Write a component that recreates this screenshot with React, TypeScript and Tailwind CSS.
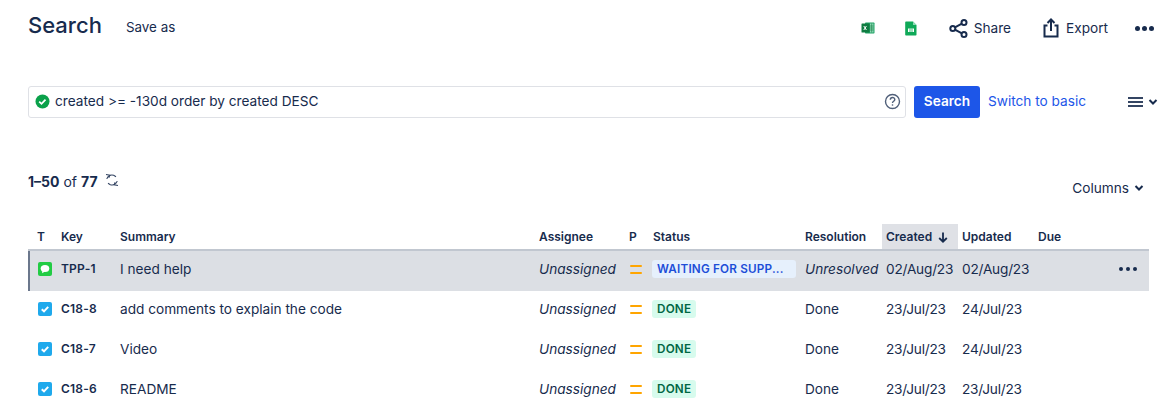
const cols = 'grid grid-cols-[29px_59px_419px_90px_24px_152px_81px_76px_76px_115px]';

const ExcelIcon = () => (
  <svg width="14" height="14" viewBox="0 0 14 14">
    <rect x="4" y="1.500" width="9.500" height="11" rx="0.8" fill="#21a366" />
    <path d="M9 2.500h3.500v9H9z" fill="#8fd9b6" />
    <path d="M9 5h3.500M9 7h3.500M9 9h3.500M10.700 2.500v9" stroke="#107c41" strokeWidth="0.6" />
    <rect x="0.5" y="2.500" width="8" height="9" rx="0.6" fill="#107c41" />
    <path d="M2.800 5l2.600 4M5.400 5L2.800 9" stroke="#fff" strokeWidth="1" />
  </svg>
);

const SheetsIcon = () => (
  <svg width="12" height="15" viewBox="0 0 12 15">
    <path d="M1 0.5h7l3.500 3.500v9.700a.8.8 0 0 1-.8.8H1a.8.8 0 0 1-.8-.8V1.300A.8.8 0 0 1 1 .5z" fill="#0fa958" />
    <path d="M8 .5V4h3.500z" fill="#8fd9b6" />
    <path d="M3 7.500h6v3.500H3z" fill="#fff" />
    <path d="M5 7.500v3.500M7 7.500v3.500" stroke="#0fa958" strokeWidth="0.8" />
  </svg>
);

const ShareIcon = () => (
  <svg width="19" height="19" viewBox="0 0 19 19" fill="none" stroke="#172b4d" strokeWidth="2">
    <circle cx="3.800" cy="9.500" r="2.500" />
    <circle cx="15" cy="3.500" r="2.500" />
    <circle cx="15" cy="15.500" r="2.500" />
    <path d="M5.900 8.400l7-3.800M5.900 10.600l7 3.800" />
  </svg>
);

const ExportIcon = () => (
  <svg width="16" height="20" viewBox="0 0 16 20" fill="none" stroke="#172b4d" strokeWidth="2">
    <path d="M4.500 7.500H1.500v11h13v-11h-3" />
    <path d="M8 13V1.500M4.500 5L8 1.500 11.500 5" />
  </svg>
);

const Dots = ({ size = 'w-[5px] h-[5px]', gap = 'gap-[2px]' }: { size?: string; gap?: string }) => (
  <span className={`flex ${gap}`}>
    <span className={`${size} rounded-full bg-[#172b4d]`} />
    <span className={`${size} rounded-full bg-[#172b4d]`} />
    <span className={`${size} rounded-full bg-[#172b4d]`} />
  </span>
);

const Chevron = () => (
  <svg width="10" height="8" viewBox="0 0 10 8" fill="none" stroke="#172b4d" strokeWidth="2">
    <path d="M1.500 2l3.500 3.500L8.500 2" />
  </svg>
);

const TaskIcon = () => (
  <svg width="14" height="14" viewBox="0 0 14 14">
    <rect width="14" height="14" rx="2" fill="#1fa9ec" />
    <path d="M3.800 7.200l2.200 2.200 4.200-4.600" fill="none" stroke="#fff" strokeWidth="2" />
  </svg>
);

const ChatIcon = () => (
  <svg width="14" height="14" viewBox="0 0 14 14">
    <rect width="14" height="14" rx="2" fill="#22cc44" />
    <ellipse cx="7" cy="6.500" rx="4.300" ry="3.500" fill="#fff" />
    <path d="M4.500 8.500L4 11.200 7 9.500z" fill="#fff" />
  </svg>
);

const Priority = () => (
  <span className="flex flex-col gap-[5px] w-3">
    <span className="h-[2px] bg-[#ffa500] rounded-full" />
    <span className="h-[2px] bg-[#ffa500] rounded-full" />
  </span>
);

const Lozenge = ({ text, waiting }: { text: string; waiting?: boolean }) => (
  <span
    className={`inline-block h-[18px] leading-[18px] px-[5px] rounded-[3px] text-[11.7px] font-semibold tracking-[0.2px] ${
      waiting ? 'w-[144px] bg-[#e6f0fc] text-[#1d4ed8]' : 'bg-[#d7fbed] text-[#006644]'
    }`}
  >
    {text}
  </span>
);

const rows = [
  { key: 'TPP-1', summary: 'I need help', status: 'WAITING FOR SUPP...', res: 'Unresolved', created: '02/Aug/23', updated: '02/Aug/23' },
  { key: 'C18-8', summary: 'add comments to explain the code', status: 'DONE', res: 'Done', created: '23/Jul/23', updated: '24/Jul/23' },
  { key: 'C18-7', summary: 'Video', status: 'DONE', res: 'Done', created: '23/Jul/23', updated: '24/Jul/23' },
  { key: 'C18-6', summary: 'README', status: 'DONE', res: 'Done', created: '23/Jul/23', updated: '23/Jul/23' },
];

export default function App() {
  return (
    <div className="w-[1166px] h-[413px] overflow-hidden bg-white text-[#172b4d] font-['Inter',sans-serif] text-[13.65px] pl-[28px] pr-[17px]">
      <div className="flex items-center h-[48px] pt-[1px]">
        <h1 className="text-[22px] leading-[28px] font-medium">Search</h1>
        <span className="ml-[24px] mt-[5px] text-[13.4px]">Save as</span>
        <div className="ml-auto -mr-[5px] flex items-center mt-[8px]">
          <ExcelIcon />
          <span className="ml-[30px]"><SheetsIcon /></span>
          <span className="ml-[32px]"><ShareIcon /></span>
          <span className="ml-[6px]">Share</span>
          <span className="ml-[32px]"><ExportIcon /></span>
          <span className="ml-[7px]">Export</span>
          <span className="ml-[27px]"><Dots /></span>
        </div>
      </div>

      <div className="flex items-center mt-[38px] h-[32px]">
        <div className="w-[878px] h-[32px] flex items-center border border-[#dfe1e6] rounded-[3px] pl-[6px] pr-[4px]">
          <svg className="mb-[2px]" width="15" height="15" viewBox="0 0 15 15">
            <circle cx="7.500" cy="7.500" r="7" fill="#0aa14a" />
            <path d="M4.200 7.700l2.300 2.100 4-4.200" fill="none" stroke="#fff" strokeWidth="1.800" />
          </svg>
          <span className="ml-[5px] flex-1 pb-[2px]">created &gt;= -130d order by created DESC</span>
          <svg className="mb-[2px]" width="17" height="17" viewBox="0 0 17 17" fill="none" stroke="#505f79" strokeWidth="1.400">
            <circle cx="8.500" cy="8.500" r="7" />
            <path d="M6.300 6.800c0-3 4.500-3 4.500-.2 0 1.700-2.300 1.700-2.300 3.400" />
            <path d="M8.500 11.300v1.400" />
          </svg>
        </div>
        <button className="ml-[8px] w-[66px] h-[32px] pb-[2px] rounded-[3px] bg-[#1d56e8] text-white font-semibold">Search</button>
        <span className="ml-[8px] pb-[2px] text-[#1d56e8]">Switch to basic</span>
        <span className="ml-auto -mr-[9px] flex items-center gap-[5px]">
          <span className="flex flex-col gap-[2px] w-[15px]">
            <span className="h-[2px] bg-[#344563]" />
            <span className="h-[2px] bg-[#344563]" />
            <span className="h-[2px] bg-[#344563]" />
          </span>
          <Chevron />
        </span>
      </div>

      <div className="flex items-start mt-[47px] h-[59px]">
        <div className="flex items-center h-[20px] mt-[6px] text-[14px]">
          <span className="font-bold">1–50</span>
          <span className="ml-[4px]">of</span>
          <span className="ml-[4px] font-bold">77</span>
          <svg className="ml-[7px] -mt-[2px]" width="14" height="14" viewBox="0 0 14 14" fill="none" stroke="#344563" strokeWidth="1.100">
            <path d="M1.800 6C2.500 3 5.500 1.300 8.700 2.300l2.300 1.400M12.200 8c-.7 3-3.700 4.700-6.900 3.700L3 10.300" />
            <path d="M1 1.500l3.800.6-1 2.700M13 12.500l-3.800-.6 1-2.700" />
          </svg>
        </div>
        <span className="ml-auto mr-[5px] mt-[13px] flex items-center gap-[5px]">
          Columns
          <Chevron />
        </span>
      </div>

      <div className="w-[1121px]">
        <div className={`${cols} h-[25px] items-center text-[12px] font-semibold border-b-2 border-[#c1c7d0] box-content`}>
          <span className="pl-[9px] pt-[1px]">T</span>
          <span className="pl-[4px] pt-[1px]">Key</span>
          <span className="pl-[4px] pt-[1px]">Summary</span>
          <span className="pl-[4px] pt-[1px]">Assignee</span>
          <span className="pl-[4px] pt-[1px]">P</span>
          <span className="pl-[4px] pt-[1px]">Status</span>
          <span className="pl-[4px] pt-[1px]">Resolution</span>
          <span className="pl-[4px] pt-[1px] h-full bg-[#dfe1e6] flex items-center gap-[6px]">
            Created
            <svg width="10" height="11" viewBox="0 0 10 11" fill="none" stroke="#172b4d" strokeWidth="1.800">
              <path d="M5 .5v9M1.200 6L5 9.700 8.800 6" />
            </svg>
          </span>
          <span className="pl-[4px] pt-[1px]">Updated</span>
          <span className="pl-[4px] pt-[1px]">Due</span>
        </div>
        {rows.map((r, i) => (
          <div key={r.key} className={`${cols} h-[40px] pb-[4px] items-center ${i === 0 ? 'bg-[#dcdfe4] shadow-[inset_2px_0_0_#6b778c]' : ''}`}>
            <span className="pl-[10px] flex items-center">
              {i === 0 ? <ChatIcon /> : <TaskIcon />}
            </span>
            <span className="pl-[4px] text-[12px] font-semibold tracking-[0.2px]">{r.key}</span>
            <span className="pl-[4px]">{r.summary}</span>
            <span className="pl-[4px] italic">Unassigned</span>
            <span className="pl-[5px]"><Priority /></span>
            <span className="pl-[3px] flex items-center"><Lozenge text={r.status} waiting={i === 0} /></span>
            <span className={`pl-[4px] whitespace-nowrap ${i === 0 ? 'italic' : ''}`}>{r.res}</span>
            <span className="pl-[4px] tracking-[-0.2px]">{r.created}</span>
            <span className="pl-[4px] tracking-[-0.2px]">{r.updated}</span>
            <span className="flex justify-end pr-[12px]">
              {i === 0 && <Dots size="w-[4px] h-[4px]" gap="gap-[3px]" />}
            </span>
          </div>
        ))}
      </div>
    </div>
  );
}
